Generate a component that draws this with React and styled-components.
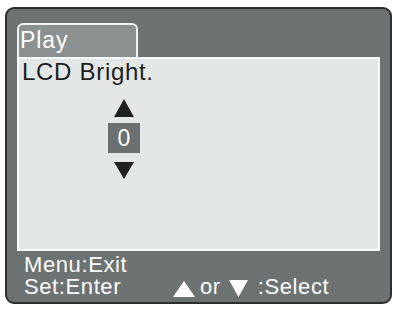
import React from "react";
import styled, { createGlobalStyle } from "styled-components";

const Global = createGlobalStyle`
  html, body { margin: 0; padding: 0; background: #ffffff; }
  body { font-family: "Liberation Sans", Arial, sans-serif; }
`;

const Frame = styled.div`
  box-sizing: border-box;
  margin: 7px 0 0 5px;
  width: 387px;
  height: 297px;
  background: #6d7273;
  border: 2px solid #2c2e2f;
  border-radius: 9px;
  padding: 14px 0 0 10px;
  display: flex;
  flex-direction: column;
`;

const Tab = styled.div`
  box-sizing: border-box;
  width: 121px;
  height: 34px;
  background: #8b9091;
  border: 2px solid #eef2f2;
  border-bottom: none;
  border-radius: 6px 6px 0 0;
  color: #ffffff;
  font-size: 23px;
  line-height: 30px;
  padding-left: 1px;
  letter-spacing: 0.9px;
`;

const Panel = styled.div`
  box-sizing: border-box;
  width: 363px;
  height: 194px;
  background: #e3e8e7;
  border: 2px solid #f7fafa;
  padding: 1px 0 0 3px;
  display: flex;
  flex-direction: column;
`;

const Title = styled.div`
  color: #1e1e1e;
  font-size: 24px;
  line-height: 24px;
  letter-spacing: 0.7px;
`;

const Selector = styled.div`
  display: flex;
  flex-direction: column;
  align-items: center;
  width: 32px;
  margin: 15px 0 0 86px;
`;

const Arrow = styled.svg`
  display: block;
  margin-top: ${(p) => p.$mt || 0}px;
`;

const ValueBox = styled.div`
  width: 32px;
  height: 30px;
  margin-top: 6px;
  background: #6b7071;
  color: #ffffff;
  font-size: 23px;
  line-height: 30px;
  text-align: center;
`;

const Footer = styled.div`
  display: flex;
  flex-direction: column;
  padding: 3px 0 0 7px;
  color: #ffffff;
  font-size: 22px;
  line-height: 22px;
  letter-spacing: 0.6px;
`;

const FootRow = styled.div`
  display: flex;
  align-items: center;
  white-space: pre;
  height: 22px;
`;

const Cell = styled.span`
  display: inline-block;
  width: ${(p) => (p.$w ? `${p.$w}px` : "auto")};
  margin-left: ${(p) => p.$ml || 0}px;
`;

const Glyph = styled.span`
  display: inline-flex;
  margin-left: ${(p) => p.$ml || 0}px;
  padding-top: 3px;
`;

const Tri = ({ up, w, h, color, mt }) => (
  <Arrow width={w} height={h} viewBox={`0 0 ${w} ${h}`} $mt={mt}>
    <polygon
      points={up ? `${w / 2},0 ${w},${h} 0,${h}` : `0,0 ${w},0 ${w / 2},${h}`}
      fill={color}
    />
  </Arrow>
);

export default function App() {
  return (
    <>
      <Global />
      <Frame>
        <Tab>Play</Tab>
        <Panel>
          <Title>LCD Bright.</Title>
          <Selector>
            <Tri up w={20} h={18} color="#202020" />
            <ValueBox>0</ValueBox>
            <Tri w={20} h={17} color="#202020" mt={9} />
          </Selector>
        </Panel>
        <Footer>
          <FootRow>Menu:Exit</FootRow>
          <FootRow>
            <Cell $w={149}>Set:Enter</Cell>
            <Glyph>
              <Tri up w={22} h={16} color="#ffffff" />
            </Glyph>
            <Cell $ml={5}>or</Cell>
            <Glyph $ml={8}>
              <Tri w={19} h={17} color="#ffffff" />
            </Glyph>
            <Cell $ml={10}>:Select</Cell>
          </FootRow>
        </Footer>
      </Frame>
    </>
  );
}
